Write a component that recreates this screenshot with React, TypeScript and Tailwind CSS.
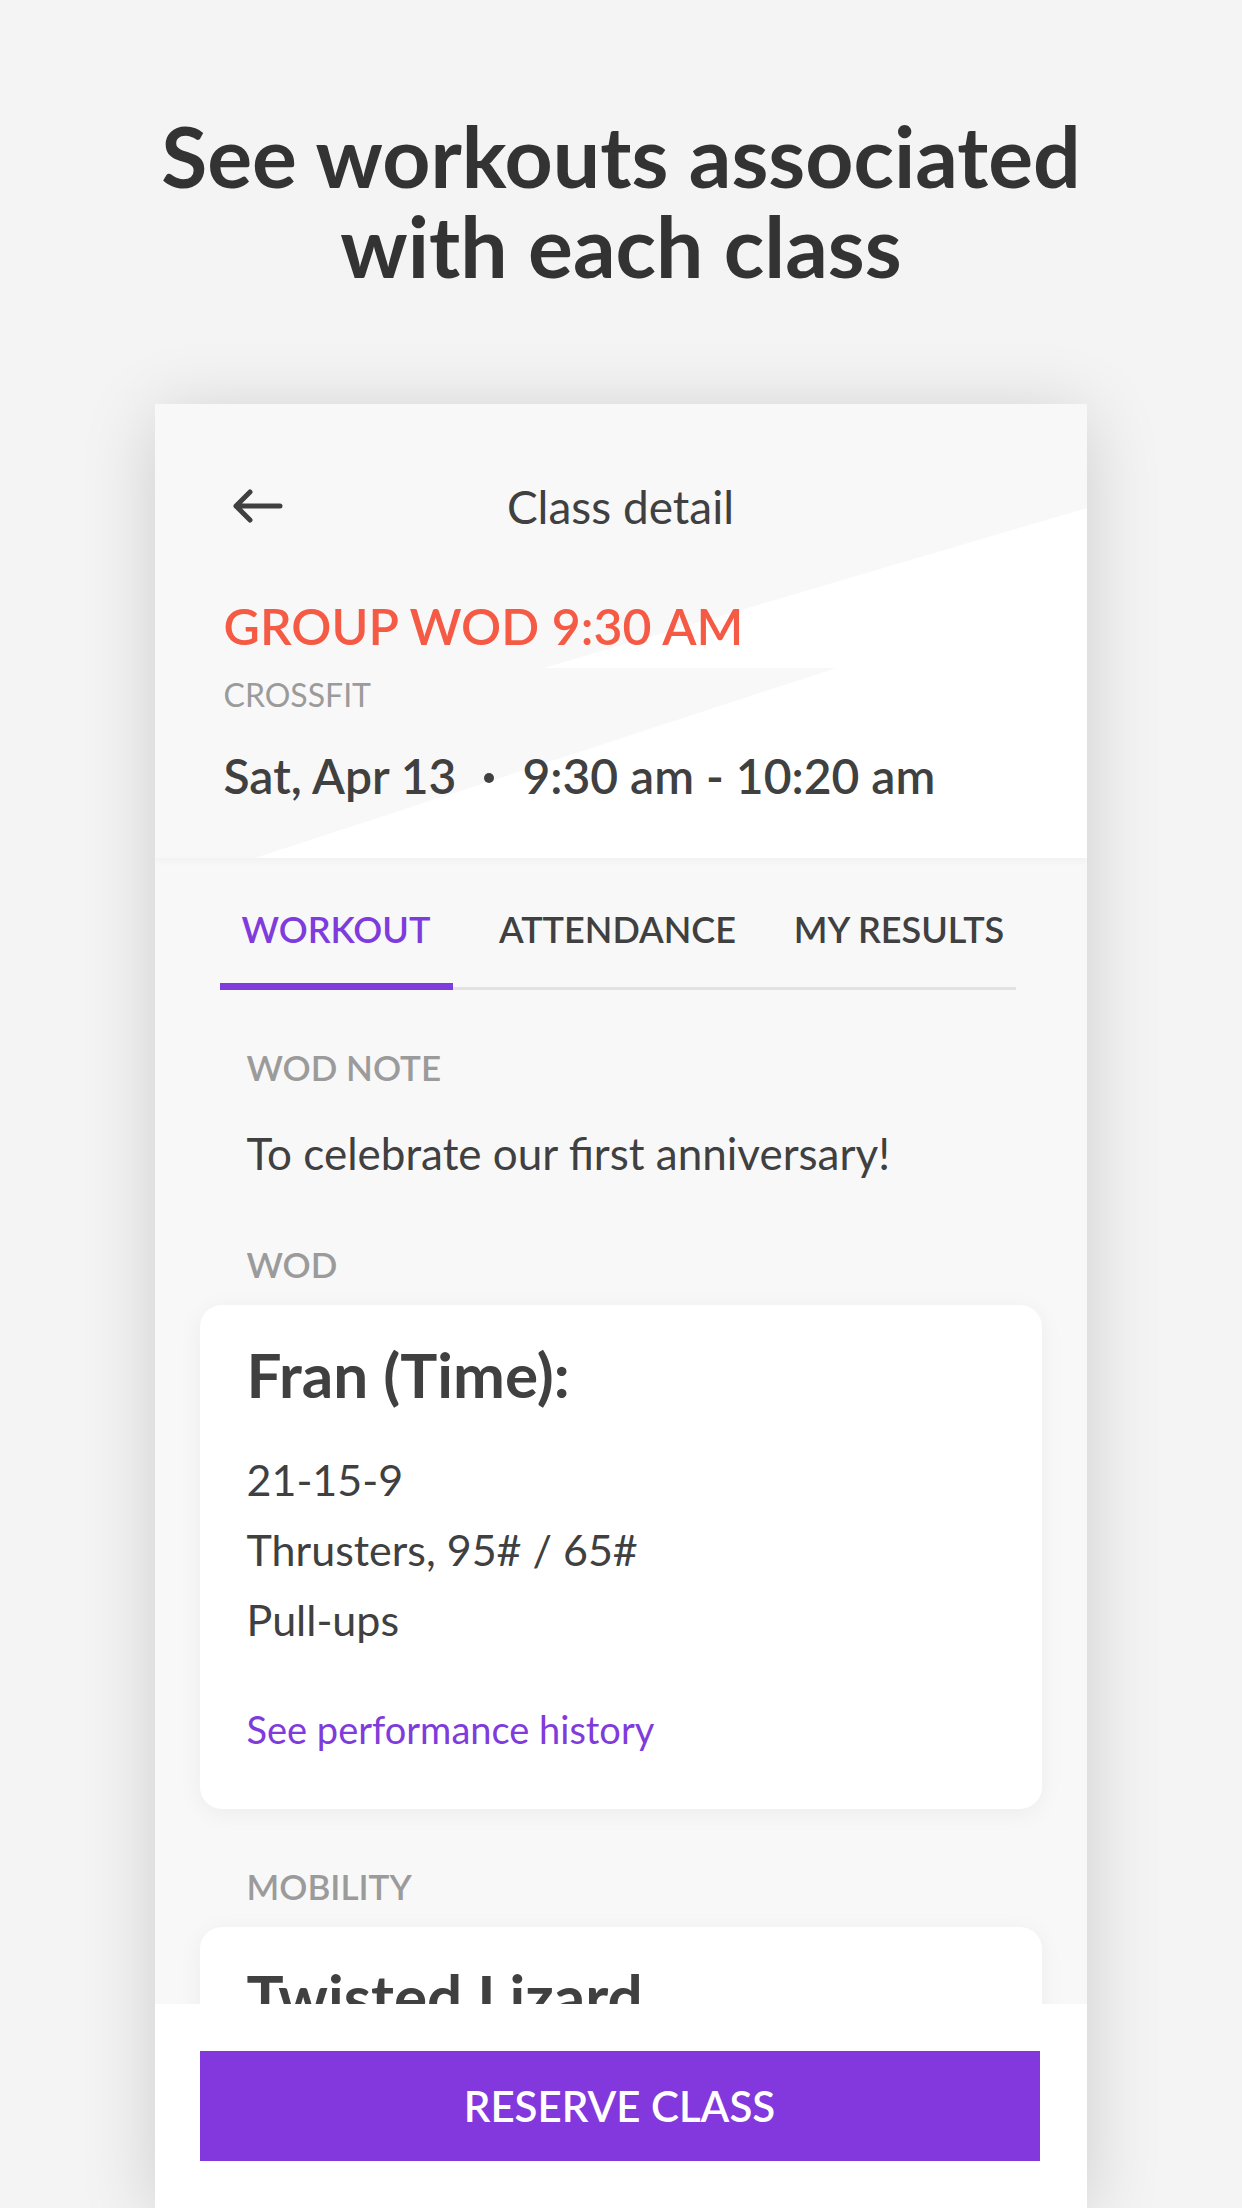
import React from 'react';

const app = "font-['Lato',_'Noto_Sans',_sans-serif]";

const BackArrow: React.FC = () => (
  <svg width="52" height="34" viewBox="0 0 52 34" fill="none">
    <path d="M49 17H5M19 3L5 17l14 14" stroke="#404040" strokeWidth="5" strokeLinecap="round" strokeLinejoin="round" />
  </svg>
);

const HeaderShapes: React.FC = () => (
  <svg className="absolute inset-0" width="932" height="454" viewBox="0 0 932 454" preserveAspectRatio="none">
    <polygon points="389,264 932,104 932,264" fill="#ffffff" />
    <polygon points="100,454 932,182 932,454" fill="#ffffff" />
  </svg>
);

interface TabProps {
  label: string;
  active?: boolean;
  width: string;
}

const Tab: React.FC<TabProps> = ({ label, active, width }) => (
  <div
    className={`${width} text-center text-[36px] leading-[1.2] font-semibold ${
      active
        ? 'text-[#7f3bdc] border-b-[7px] border-[#7f3bdc] pb-[32px]'
        : 'text-[#404040] border-b-[3px] border-[#e2e2e2] pb-[36px]'
    }`}
  >
    {label}
  </div>
);

const SectionLabel: React.FC<{ children: React.ReactNode; className?: string }> = ({ children, className = '' }) => (
  <div className={`pl-[92px] text-[35px] leading-[1.2] font-semibold text-[#9b9b9b] ${className}`}>{children}</div>
);

export default function App() {
  return (
    <div className={`${app} w-[1242px] h-[2208px] overflow-hidden bg-[#f4f4f4] flex flex-col items-center`}>
      <h1 className="mt-[111px] text-center text-[84px] leading-[90px] font-bold text-[#333333]">
        <div>See workouts associated</div>
        <div>with each class</div>
      </h1>

      <div className="relative mt-[113px] w-[932px] h-[1804px] ml-[-1px] bg-[#f8f8f8] overflow-hidden shadow-[0_10px_70px_rgba(0,0,0,0.16)]">
        {/* header */}
        <div className="relative h-[454px] pt-[75px] bg-[#f8f8f8] shadow-[0_3px_8px_rgba(0,0,0,0.035)] z-10">
          <HeaderShapes />
          <div className="relative">
            <div className="relative h-[55px] flex items-center justify-center">
              <div className="absolute left-[76px] top-[10px]">
                <BackArrow />
              </div>
              <span className="text-[46px] leading-[1.2] text-[#404040]">Class detail</span>
            </div>
            <div className="pl-[69px]">
              <div className="mt-[62px] text-[50px] leading-[1.2] font-semibold text-[#f55a45]">GROUP WOD 9:30 AM</div>
              <div className="mt-[20px] text-[32px] leading-[1.2] text-[#9b9b9b]">CROSSFIT</div>
              <div className="mt-[33px] text-[48px] leading-[1.2] font-semibold text-[#404040] flex items-center">
                <span>Sat, Apr 13</span>
                <span className="mx-[28px] mt-[4px] w-[10px] h-[10px] rounded-full bg-[#404040]" />
                <span>9:30 am - 10:20 am</span>
              </div>
            </div>
          </div>
        </div>

        {/* tabs */}
        <div className="ml-[65px] w-[796px] mt-[50px] flex items-end">
          <Tab label="WORKOUT" active width="w-[233px]" />
          <Tab label="ATTENDANCE" width="w-[330px]" />
          <Tab label="MY RESULTS" width="w-[233px]" />
        </div>

        <SectionLabel className="mt-[56px]">WOD NOTE</SectionLabel>
        <div className="mt-[39px] pl-[92px] text-[44px] leading-[1.2] text-[#404040]">To celebrate our first anniversary!</div>

        <SectionLabel className="mt-[63px]">WOD</SectionLabel>
        <div className="mt-[20px] mx-[45px] bg-white rounded-[22px] shadow-[0_4px_24px_rgba(0,0,0,0.05)] pl-[47px] pt-[32px] pb-[56px]">
          <div className="text-[62px] leading-[1.2] font-bold text-[#404040]">Fran (Time):</div>
          <div className="mt-[34px] text-[43px] leading-[70px] text-[#404040]">
            <div>21-15-9</div>
            <div>Thrusters, 95# / 65#</div>
            <div>Pull-ups</div>
          </div>
          <div className="mt-[52px] text-[38px] leading-[1.2] text-[#7f3bdc]">See performance history</div>
        </div>

        <SectionLabel className="mt-[56px]">MOBILITY</SectionLabel>
        <div className="mt-[20px] mx-[45px] bg-white rounded-[22px] shadow-[0_4px_24px_rgba(0,0,0,0.05)] pl-[47px] pt-[32px] pb-[56px]">
          <div className="text-[62px] leading-[1.2] font-bold text-[#404040]">Twisted Lizard</div>
        </div>

        {/* bottom action bar */}
        <div className="absolute left-0 right-0 bottom-0 h-[204px] bg-white z-20 pt-[47px] pl-[45px] pr-[47px]">
          <button className="w-full h-[110px] bg-[#8338dd] text-white text-[42px] leading-[1.2] font-semibold">RESERVE CLASS</button>
        </div>
      </div>
    </div>
  );
}
